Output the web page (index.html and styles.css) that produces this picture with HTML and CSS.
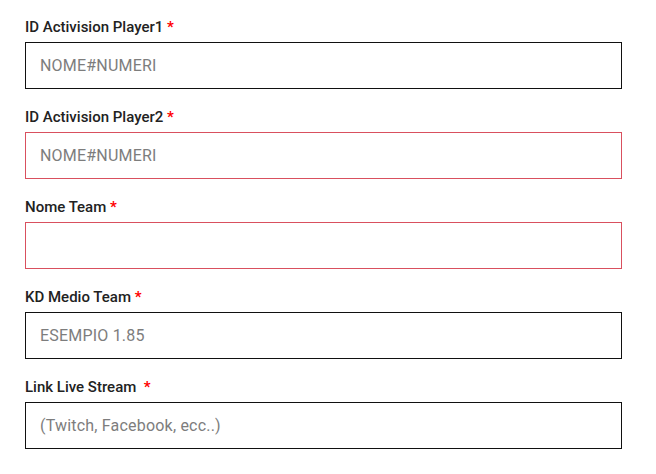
FILE: index.html
```html
<!DOCTYPE html>
<html lang="it">
<head>
<meta charset="utf-8">
<title>Iscrizione</title>
<link rel="stylesheet" href="styles.css">
</head>
<body>
<form class="form">
  <div class="field">
    <label class="label" for="p1">ID Activision Player1 <span class="req">*</span></label>
    <input class="input" id="p1" type="text" placeholder="NOME#NUMERI">
  </div>
  <div class="field">
    <label class="label" for="p2">ID Activision Player2 <span class="req">*</span></label>
    <input class="input input-error" id="p2" type="text" placeholder="NOME#NUMERI">
  </div>
  <div class="field">
    <label class="label" for="team">Nome Team <span class="req">*</span></label>
    <input class="input input-error" id="team" type="text">
  </div>
  <div class="field">
    <label class="label" for="kd">KD Medio Team <span class="req">*</span></label>
    <input class="input" id="kd" type="text" placeholder="ESEMPIO 1.85">
  </div>
  <div class="field">
    <label class="label" for="live">Link Live Stream &nbsp;<span class="req">*</span></label>
    <input class="input" id="live" type="text" placeholder="(Twitch, Facebook, ecc..)">
  </div>
</form>
</body>
</html>
```
FILE: styles.css
```css
html, body {
  margin: 0;
  padding: 0;
  background: #ffffff;
}

body {
  font-family: Roboto, "Liberation Sans", sans-serif;
}

.form {
  display: flex;
  flex-direction: column;
  gap: 18px;
  padding: 17px 0 0 25px;
  width: 597px;
}

.field {
  display: flex;
  flex-direction: column;
  gap: 5px;
}

.label {
  font-size: 15px;
  line-height: 20px;
  font-weight: 500;
  color: #222222;
}

.req {
  color: #ff0000;
  font-weight: 700;
}

.input {
  box-sizing: border-box;
  width: 597px;
  height: 47px;
  margin: 0;
  padding: 0 14px;
  border: 1px solid #111111;
  border-radius: 0;
  background: #ffffff;
  font-family: Roboto, "Liberation Sans", sans-serif;
  font-size: 16px;
  letter-spacing: 0.2px;
  color: #333333;
  outline: none;
}

.input::placeholder {
  color: #7d7d7d;
  opacity: 1;
}

.input.input-error {
  border: 1px solid #d9505e;
}
```
